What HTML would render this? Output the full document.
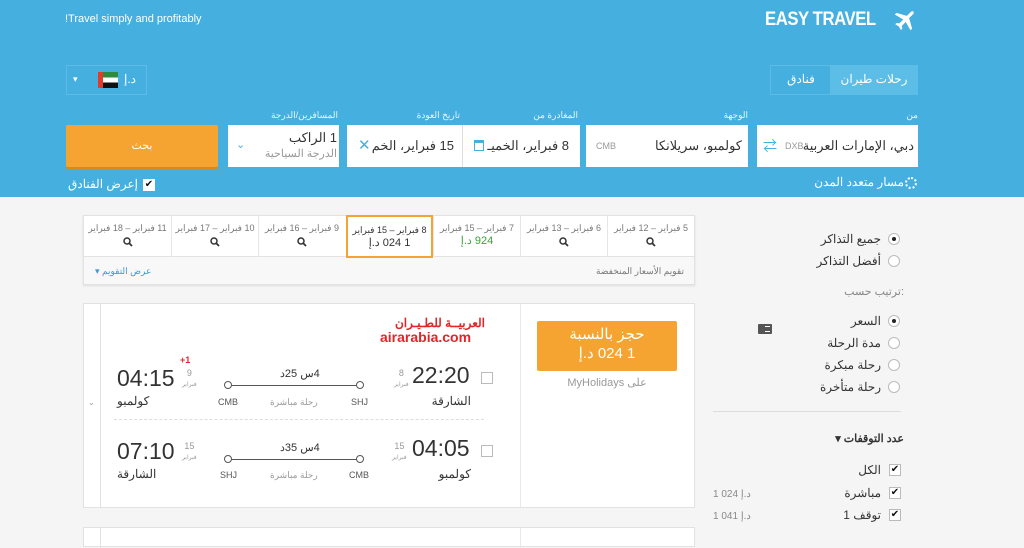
<!DOCTYPE html>
<html><head><meta charset="utf-8"><style>
*{margin:0;padding:0;box-sizing:border-box}
body{width:1024px;height:538px;overflow:hidden;background:#f5f5f5;font-family:"Liberation Sans","Noto Sans CJK SC",sans-serif;position:relative;color:#333}
.a{position:absolute}
.hdr{left:0;top:0;width:1024px;height:197px;background:#45b0e0}
.w{color:#fff}
.lbl{font-size:9px;color:#e8f5fc;top:110px}
.fld{background:#fff;top:125px;height:42px}
.t{font-size:13px;color:#333;direction:rtl}
.g{color:#999}
.cell{top:215px;height:42px;width:87px;border-left:1px solid #e6e6e6;text-align:center;font-size:9px;color:#777;padding-top:8px;direction:rtl}
.rad{width:12px;height:12px;border:1px solid #bbb;border-radius:50%;background:#fff}
.rad.on::after{content:"";position:absolute;left:3px;top:3px;width:4px;height:4px;border-radius:50%;background:#222}
.cb{width:12px;height:12px;border:1px solid #bbb;background:#fff;font-size:10px;line-height:10px;text-align:center;color:#111}
.sl{font-size:12px;color:#333;direction:rtl;text-align:right}
.mg{display:block;margin:3px auto 0}
</style></head><body>
<div class="a hdr"></div>
<div class="a w" style="left:65px;top:13px;font-size:11px">!Travel simply and profitably</div>
<div class="a w" style="left:765px;top:9px;font-size:19px;font-weight:bold;letter-spacing:-0.5px;transform:scaleX(0.88);transform-origin:left">EASY TRAVEL</div>
<svg class="a" style="left:891px;top:8px" width="26" height="26" viewBox="0 0 24 24"><path fill="#fff" d="M21 3.5c-.8-.8-2-.6-2.8.2L14.6 7.3 5 4.5 3.5 6l7.8 4.6-3.6 3.6-2.6-.4-1.2 1.2 3.3 2 2 3.3 1.2-1.2-.4-2.6 3.6-3.6L18 20.5l1.5-1.5-2.8-9.6 3.6-3.6c.8-.8 1-2 .2-2.8z"/></svg>

<div class="a" style="left:770px;top:65px;width:148px;height:30px;border:1px solid #5fbbe5"></div>
<div class="a" style="left:830px;top:65px;width:88px;height:30px;background:#5cbde6"></div>
<div class="a w" style="left:835px;top:72px;width:78px;text-align:center;font-size:12px">رحلات طيران</div>
<div class="a w" style="left:772px;top:72px;width:58px;text-align:center;font-size:12px">فنادق</div>

<div class="a" style="left:66px;top:65px;width:81px;height:30px;border:1px solid #5fbbe5"></div>
<div class="a w" style="left:73px;top:74px;font-size:9px">▾</div>
<div class="a" style="left:98px;top:72px;width:20px;height:16px;background:linear-gradient(#2e8a3c 0 33%,#fff 33% 66%,#111 66%);border-left:5px solid #e23b2c"></div>
<div class="a w" style="left:124px;top:72px;font-size:12px">د.إ</div>

<div class="a lbl" style="right:106px">من</div>
<div class="a lbl" style="right:276px">الوجهة</div>
<div class="a lbl" style="right:446px">المغادرة من</div>
<div class="a lbl" style="right:564px">تاريخ العودة</div>
<div class="a lbl" style="right:686px">المسافرين/الدرجة</div>

<div class="a fld" style="left:757px;width:161px"></div>
<div class="a t" style="right:110px;top:138px">دبي، الإمارات العربية</div>
<div class="a g" style="left:785px;top:141px;font-size:9px">DXB</div>
<div class="a" style="left:763px;top:136px;color:#45b0e0;font-size:14px">⇄</div>

<div class="a fld" style="left:586px;width:162px"></div>
<div class="a t" style="right:282px;top:138px">كولمبو، سريلانكا</div>
<div class="a g" style="left:596px;top:141px;font-size:9px">CMB</div>

<div class="a fld" style="left:347px;width:233px"></div>
<div class="a" style="left:462px;top:125px;width:1px;height:42px;background:#ddd"></div>
<div class="a t" style="right:455px;top:138px">8 فبراير، الخميـ</div>
<div class="a" style="left:474px;top:140px;width:10px;height:11px;border:1px solid #45b0e0;border-top-width:3px"></div>
<div class="a t" style="right:570px;top:138px">15 فبراير، الخم</div>
<div class="a" style="left:358px;top:136px;color:#45b0e0;font-size:15px">✕</div>

<div class="a fld" style="left:228px;width:111px"></div>
<div class="a t" style="right:687px;top:130px">1 الراكب</div>
<div class="a" style="right:687px;top:147px;font-size:11px;color:#999">الدرجة السياحية</div>
<div class="a" style="left:236px;top:138px;color:#45b0e0;font-size:11px">⌄</div>

<div class="a" style="left:66px;top:125px;width:152px;height:42px;background:#f5a431;border-radius:2px;box-shadow:0 2px 0 #d98a1c"></div>
<div class="a w" style="left:66px;top:139px;width:152px;text-align:center;font-size:11px">بحث</div>

<div class="a cb" style="left:143px;top:179px;border-color:#fff">✔</div>
<div class="a w" style="left:66px;top:177px;font-size:12px;direction:rtl;width:72px;text-align:right">إعرض الفنادق</div>
<div class="a w" style="right:120px;top:175px;font-size:12px;direction:rtl">مسار متعدد المدن</div>
<div class="a" style="left:905px;top:177px;width:12px;height:12px;border:2px dotted #fff;border-radius:50%"></div>

<!-- calendar -->
<div class="a" style="left:83px;top:215px;width:612px;height:70px;background:#f8f8f8;border:1px solid #e2e2e2;box-shadow:0 1px 2px #ddd"></div>
<div class="a" style="left:84px;top:216px;width:610px;height:41px;background:#fff;border-bottom:1px solid #e2e2e2"></div>
<div class="a cell" style="left:607px">5 فبراير – 12 فبراير<svg class="mg" width="10" height="10"><circle cx="4" cy="4" r="3" stroke="#333" stroke-width="1.5" fill="none"/><path d="M6 6 L9 9" stroke="#333" stroke-width="1.8"/></svg></div>
<div class="a cell" style="left:520px">6 فبراير – 13 فبراير<svg class="mg" width="10" height="10"><circle cx="4" cy="4" r="3" stroke="#333" stroke-width="1.5" fill="none"/><path d="M6 6 L9 9" stroke="#333" stroke-width="1.8"/></svg></div>
<div class="a cell" style="left:433px">7 فبراير – 15 فبراير<br><span style="font-size:11px;color:#3aa03a">924 د.إ</span></div>
<div class="a cell" style="left:346px;border:2px solid #f5a431;color:#333;height:43px">8 فبراير – 15 فبراير<br><span style="font-size:11px;color:#333">1 024 د.إ</span></div>
<div class="a cell" style="left:258px">9 فبراير – 16 فبراير<svg class="mg" width="10" height="10"><circle cx="4" cy="4" r="3" stroke="#333" stroke-width="1.5" fill="none"/><path d="M6 6 L9 9" stroke="#333" stroke-width="1.8"/></svg></div>
<div class="a cell" style="left:171px">10 فبراير – 17 فبراير<svg class="mg" width="10" height="10"><circle cx="4" cy="4" r="3" stroke="#333" stroke-width="1.5" fill="none"/><path d="M6 6 L9 9" stroke="#333" stroke-width="1.8"/></svg></div>
<div class="a cell" style="left:84px;border:none">11 فبراير – 18 فبراير<svg class="mg" width="10" height="10"><circle cx="4" cy="4" r="3" stroke="#333" stroke-width="1.5" fill="none"/><path d="M6 6 L9 9" stroke="#333" stroke-width="1.8"/></svg></div>
<div class="a" style="right:340px;top:266px;font-size:9px;color:#777;direction:rtl">تقويم الأسعار المنخفضة</div>
<div class="a" style="left:95px;top:266px;font-size:9px;color:#3a9ad9;direction:rtl">عرض التقويم ▾</div>

<!-- result card -->
<div class="a" style="left:83px;top:303px;width:612px;height:205px;background:#fff;border:1px solid #e2e2e2"></div>
<div class="a" style="left:100px;top:304px;width:1px;height:203px;background:#e2e2e2"></div>
<div class="a" style="left:520px;top:304px;width:1px;height:203px;background:#e8e8e8"></div>
<div class="a" style="left:88px;top:398px;font-size:8px;color:#999">⌄</div>
<div class="a" style="left:380px;top:317px;color:#e52428;font-size:12px;line-height:13px;font-weight:bold;direction:rtl;width:105px;text-align:right">العربيــة للطـيـران</div>
<div class="a" style="left:380px;top:330px;color:#e52428;font-size:14px;line-height:15px;font-weight:bold">airarabia.com</div>

<div class="a" style="left:537px;top:321px;width:140px;height:50px;background:#f5a431;border-radius:2px"></div>
<div class="a w" style="left:537px;top:325px;width:140px;text-align:center;font-size:15px;line-height:19px;direction:rtl">حجز بالنسبة<br>1 024 د.إ</div>
<div class="a" style="left:537px;top:376px;width:140px;text-align:center;font-size:11px;color:#999">MyHolidays على</div>

<!-- row1 -->
<div class="a cb" style="left:481px;top:372px;width:12px;height:12px"></div>
<div class="a" style="left:412px;top:362px;font-size:23px;color:#333">22:20</div>
<div class="a" style="left:394px;top:368px;font-size:9px;color:#999;text-align:center">8<br><span style="font-size:6px">فبراير</span></div>
<div class="a" style="right:553px;top:394px;font-size:12px;direction:rtl">الشارقة</div>
<div class="a" style="left:117px;top:365px;font-size:23px;color:#333">04:15</div>
<div class="a" style="left:180px;top:355px;font-size:9px;color:#e52428;font-weight:bold">+1</div>
<div class="a" style="left:182px;top:368px;font-size:9px;color:#999;text-align:center">9<br><span style="font-size:6px">فبراير</span></div>
<div class="a" style="left:117px;top:394px;font-size:12px;direction:rtl">كولمبو</div>
<div class="a" style="left:230px;top:385px;width:130px;height:1px;background:#555"></div>
<div class="a" style="left:224px;top:381px;width:8px;height:8px;border:1px solid #555;border-radius:50%;background:#fff"></div>
<div class="a" style="left:356px;top:381px;width:8px;height:8px;border:1px solid #555;border-radius:50%;background:#fff"></div>
<div class="a" style="left:280px;top:367px;font-size:11px;direction:rtl">4س 25د</div>
<div class="a" style="left:218px;top:397px;font-size:9px;color:#555">CMB</div>
<div class="a" style="left:351px;top:397px;font-size:9px;color:#555">SHJ</div>
<div class="a" style="left:270px;top:397px;font-size:9px;color:#999;direction:rtl">رحلة مباشرة</div>
<div class="a" style="left:114px;top:419px;width:370px;border-top:1px dashed #ddd"></div>
<!-- row2 -->
<div class="a cb" style="left:481px;top:445px"></div>
<div class="a" style="left:412px;top:435px;font-size:23px;color:#333">04:05</div>
<div class="a" style="left:392px;top:441px;font-size:9px;color:#999;text-align:center">15<br><span style="font-size:6px">فبراير</span></div>
<div class="a" style="right:553px;top:467px;font-size:12px;direction:rtl">كولمبو</div>
<div class="a" style="left:117px;top:438px;font-size:23px;color:#333">07:10</div>
<div class="a" style="left:182px;top:441px;font-size:9px;color:#999;text-align:center">15<br><span style="font-size:6px">فبراير</span></div>
<div class="a" style="left:117px;top:467px;font-size:12px;direction:rtl">الشارقة</div>
<div class="a" style="left:230px;top:459px;width:130px;height:1px;background:#555"></div>
<div class="a" style="left:224px;top:455px;width:8px;height:8px;border:1px solid #555;border-radius:50%;background:#fff"></div>
<div class="a" style="left:356px;top:455px;width:8px;height:8px;border:1px solid #555;border-radius:50%;background:#fff"></div>
<div class="a" style="left:280px;top:441px;font-size:11px;direction:rtl">4س 35د</div>
<div class="a" style="left:220px;top:470px;font-size:9px;color:#555">SHJ</div>
<div class="a" style="left:349px;top:470px;font-size:9px;color:#555">CMB</div>
<div class="a" style="left:270px;top:470px;font-size:9px;color:#999;direction:rtl">رحلة مباشرة</div>

<div class="a" style="left:83px;top:527px;width:612px;height:20px;background:#fff;border:1px solid #e2e2e2"></div>
<div class="a" style="left:100px;top:528px;width:1px;height:20px;background:#e2e2e2"></div>
<div class="a" style="left:520px;top:528px;width:1px;height:20px;background:#e8e8e8"></div>

<!-- sidebar -->
<div class="a rad on" style="left:888px;top:233px"></div>
<div class="a sl" style="right:143px;top:232px">جميع التذاكر</div>
<div class="a rad" style="left:888px;top:255px"></div>
<div class="a sl" style="right:143px;top:254px">أفضل التذاكر</div>
<div class="a sl" style="right:120px;top:285px;color:#888;font-size:11px">:ترتيب حسب</div>
<div class="a rad on" style="left:888px;top:315px"></div>
<div class="a sl" style="right:143px;top:314px">السعر</div>
<div class="a rad" style="left:888px;top:337px"></div>
<div class="a sl" style="right:143px;top:336px">مدة الرحلة</div>
<div class="a rad" style="left:888px;top:359px"></div>
<div class="a sl" style="right:143px;top:358px">رحلة مبكرة</div>
<div class="a rad" style="left:888px;top:381px"></div>
<div class="a sl" style="right:143px;top:380px">رحلة متأخرة</div>
<div class="a" style="left:758px;top:324px;width:14px;height:10px;background:#555;border-radius:1px"></div>
<div class="a" style="left:765px;top:326px;width:5px;height:6px;border-top:1px solid #fff;border-bottom:1px solid #fff"></div>
<div class="a" style="left:713px;top:411px;width:188px;height:1px;background:#ddd"></div>
<div class="a sl" style="right:120px;top:432px;font-weight:bold;font-size:11px">عدد التوقفات ▾</div>
<div class="a cb" style="left:889px;top:464px">✔</div>
<div class="a sl" style="right:143px;top:463px">الكل</div>
<div class="a cb" style="left:889px;top:487px">✔</div>
<div class="a sl" style="right:143px;top:486px">مباشرة</div>
<div class="a cb" style="left:889px;top:509px">✔</div>
<div class="a sl" style="right:143px;top:508px">توقف 1</div>
<div class="a" style="left:713px;top:489px;font-size:10px;color:#888">1 024 د.إ</div>
<div class="a" style="left:713px;top:511px;font-size:10px;color:#888">1 041 د.إ</div>
</body></html>
